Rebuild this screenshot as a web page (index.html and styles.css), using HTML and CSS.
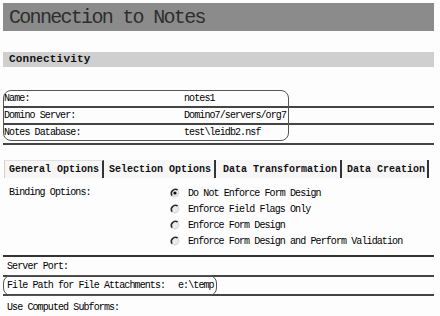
FILE: index.html
```html
<!DOCTYPE html>
<html>
<head>
<meta charset="utf-8">
<link rel="stylesheet" href="styles.css">
</head>
<body>
<div class="page">
  <div class="title">Connection to Notes</div>
  <div class="section-head">Connectivity</div>

  <div class="conn">
    <div class="row"><span class="label">Name:</span><span class="value">notes1</span></div>
    <div class="row line"><span class="label">Domino Server:</span><span class="value">Domino7/servers/org7</span></div>
    <div class="row line"><span class="label">Notes Database:</span><span class="value">test\leidb2.nsf</span></div>
    <div class="mark mark-conn"></div>
  </div>

  <div class="tabs">
    <div class="tab tab-active">General Options</div>
    <div class="tab">Selection Options</div>
    <div class="tab tab-3">Data Transformation</div>
    <div class="tab tab-4">Data Creation</div>
  </div>

  <div class="binding">
    <div class="binding-label">Binding Options:</div>
    <div class="radios">
      <div class="radio"><svg class="rb" viewBox="0 0 10 10" width="10" height="10"><circle cx="5" cy="5" r="4" fill="#ececec"/><path d="M2.2 7.8 A4 4 0 0 1 7.8 2.2" fill="none" stroke="#2a2a2a" stroke-width="1.6"/><path d="M7.8 2.2 A4 4 0 0 1 2.2 7.8" fill="none" stroke="#d8d8d8" stroke-width="1.2"/><circle cx="5" cy="5" r="1.6" fill="#111"/></svg><span>Do Not Enforce Form Design</span></div>
      <div class="radio"><svg class="rb" viewBox="0 0 10 10" width="10" height="10"><circle cx="5" cy="5" r="4" fill="#ececec"/><path d="M2.2 7.8 A4 4 0 0 1 7.8 2.2" fill="none" stroke="#2a2a2a" stroke-width="1.6"/><path d="M7.8 2.2 A4 4 0 0 1 2.2 7.8" fill="none" stroke="#d8d8d8" stroke-width="1.2"/></svg><span>Enforce Field Flags Only</span></div>
      <div class="radio"><svg class="rb" viewBox="0 0 10 10" width="10" height="10"><circle cx="5" cy="5" r="4" fill="#ececec"/><path d="M2.2 7.8 A4 4 0 0 1 7.8 2.2" fill="none" stroke="#2a2a2a" stroke-width="1.6"/><path d="M7.8 2.2 A4 4 0 0 1 2.2 7.8" fill="none" stroke="#d8d8d8" stroke-width="1.2"/></svg><span>Enforce Form Design</span></div>
      <div class="radio"><svg class="rb" viewBox="0 0 10 10" width="10" height="10"><circle cx="5" cy="5" r="4" fill="#ececec"/><path d="M2.2 7.8 A4 4 0 0 1 7.8 2.2" fill="none" stroke="#2a2a2a" stroke-width="1.6"/><path d="M7.8 2.2 A4 4 0 0 1 2.2 7.8" fill="none" stroke="#d8d8d8" stroke-width="1.2"/></svg><span>Enforce Form Design and Perform Validation</span></div>
    </div>
  </div>

  <div class="opts">
    <div class="opt-row port">Server Port:</div>
    <div class="opt-row file"><span class="label-file">File Path for File Attachments:</span><span>e:\temp</span><div class="mark mark-file"></div></div>
    <div class="opt-row sub">Use Computed Subforms:</div>
  </div>
</div>
</body>
</html>
```

FILE: styles.css
```css
html, body {
  margin: 0;
  padding: 0;
  background: #fdfdfd;
}
body {
  width: 440px;
  height: 316px;
  overflow: hidden;
  font-family: "Liberation Mono", "DejaVu Sans Mono", monospace;
  color: #000;
}
.page {
  padding: 3px 6px 0 3px;
}
.title {
  height: 28px;
  line-height: 29px;
  background: #8b8b8b;
  color: #2e2e2e;
  font-size: 20px;
  letter-spacing: -1.7px;
  padding-left: 6px;
}
.section-head {
  margin-top: 21px;
  height: 15px;
  line-height: 15px;
  background: #cfcfcf;
  font-size: 11px;
  font-weight: bold;
  letter-spacing: 0.2px;
  padding-left: 6px;
  color: #111;
}
.conn {
  position: relative;
  margin-top: 24px;
  padding-bottom: 3px;
  border-bottom: 2px solid #444;
}
.row {
  display: flex;
  height: 15px;
  line-height: 15px;
  font-size: 10px;
  letter-spacing: -0.9px;
}
.row.line {
  border-top: 2px solid #444;
}
.label {
  width: 180px;
  padding-left: 1px;
}
.mark {
  position: absolute;
  border: 1px solid #555;
  border-radius: 8px;
  box-sizing: border-box;
}
.mark-conn {
  left: 0;
  top: -1px;
  width: 286px;
  height: 51px;
}
.tabs {
  display: flex;
  margin-top: 15px;
  margin-left: 1px;
  height: 18px;
}
.tab {
  height: 18px;
  line-height: 19px;
  font-size: 10px;
  font-weight: bold;
  padding: 0 3px 0 5px;
  border-right: 2px solid #333;
  background: #f6f6f6;
  color: #111;
}
.tab-active {
  border-left: 1px solid #d0d0d0;
  border-top: 1px solid #e0e0e0;
  height: 17px;
  line-height: 18px;
  padding-left: 4px;
}
.tab-3 {
  padding-left: 7px;
}
.tab-4 {
  padding-left: 5px;
  padding-right: 2px;
}
.binding {
  display: flex;
  margin-top: 7px;
  padding-bottom: 6px;
  border-bottom: 2px solid #333;
  font-size: 10px;
  letter-spacing: -0.9px;
}
.binding-label {
  width: 161px;
  padding-left: 6px;
  line-height: 16px;
}
.radios {
  display: flex;
  flex-direction: column;
}
.radio {
  display: flex;
  align-items: center;
  height: 16px;
}
.rb {
  margin-right: 8px;
  flex: none;
}
.opts {
  font-size: 10px;
  letter-spacing: -0.9px;
}
.opt-row {
  padding-left: 4px;
}
.port {
  height: 18px;
  line-height: 19px;
}
.file {
  position: relative;
  display: flex;
  height: 17px;
  line-height: 17px;
  border-top: 2px solid #444;
  border-bottom: 2px solid #444;
}
.label-file {
  width: 171px;
}
.mark-file {
  left: 0;
  top: -2px;
  width: 214px;
  height: 21px;
}
.sub {
  padding-top: 5px;
  line-height: 14px;
}
```
